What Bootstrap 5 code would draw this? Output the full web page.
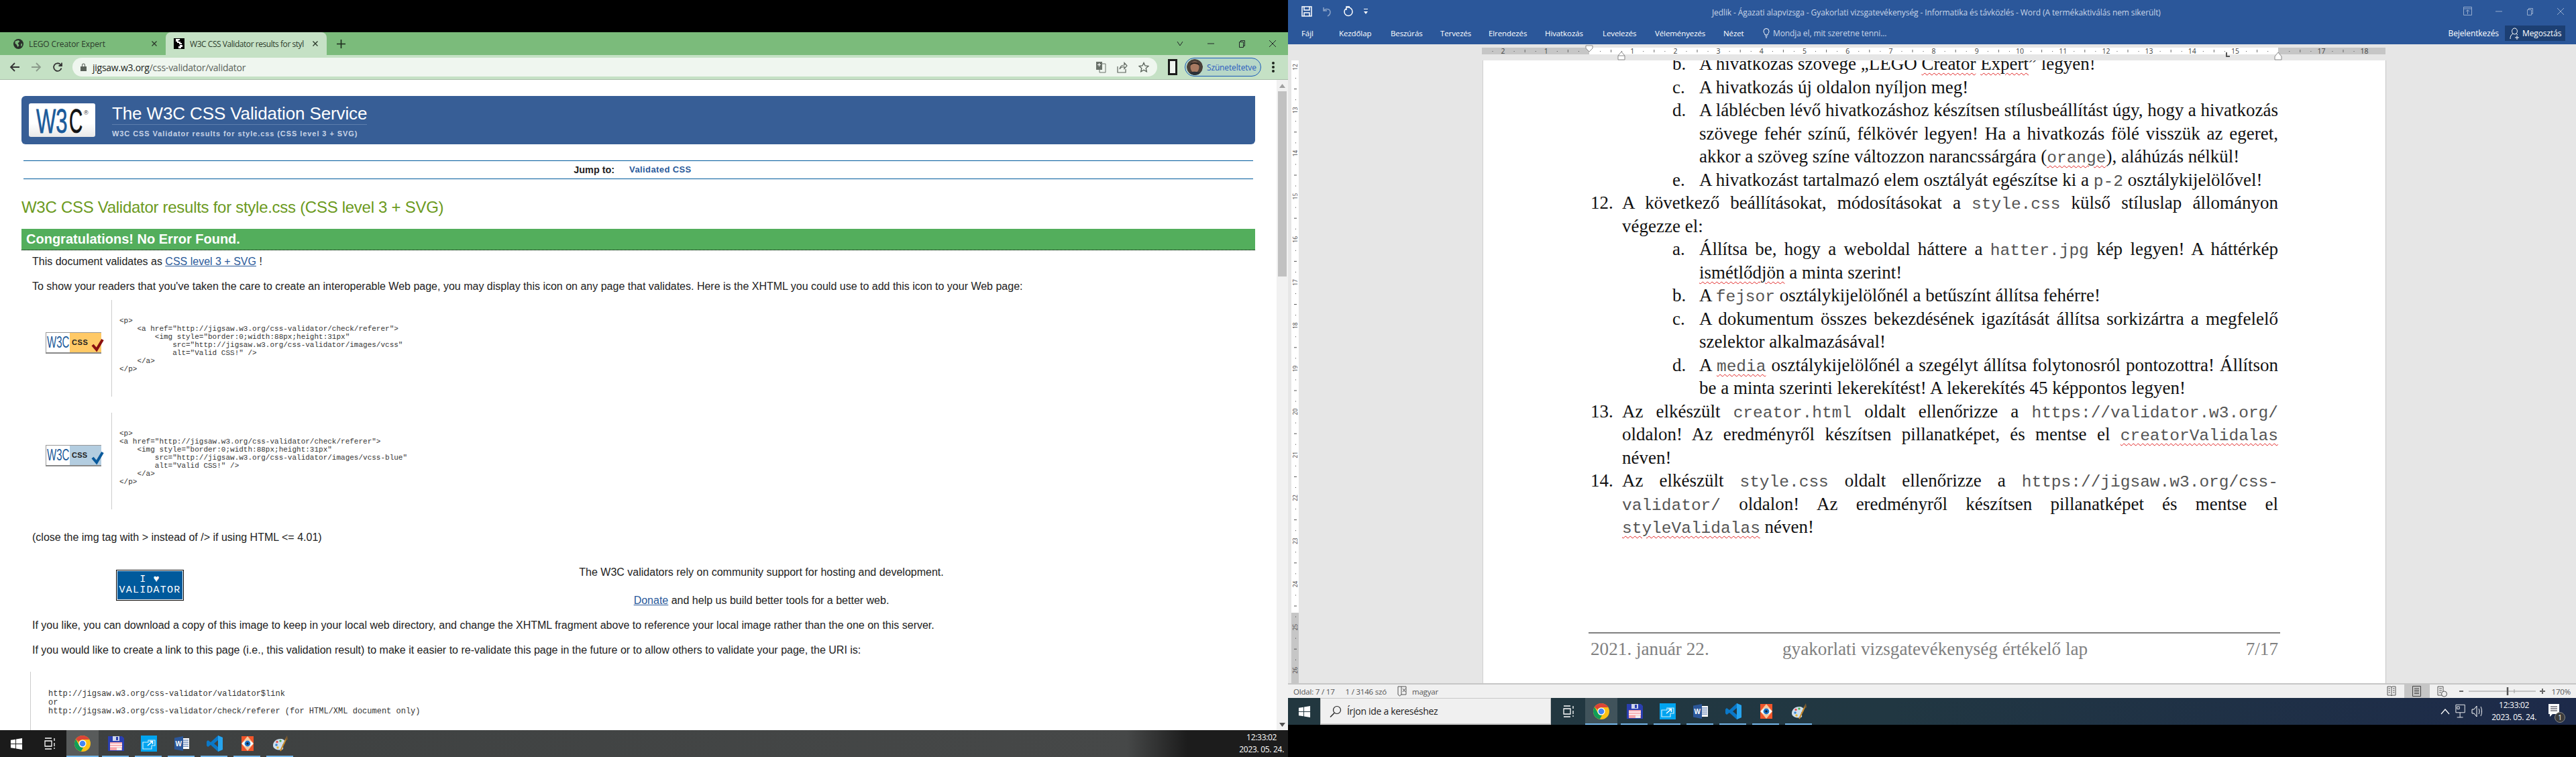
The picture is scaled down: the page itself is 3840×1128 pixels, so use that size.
<!DOCTYPE html>
<html lang="hu">
  <head>
    <meta charset="UTF-8" />
    <title>Screenshot</title>
    <link href="https://cdn.jsdelivr.net/npm/bootstrap@5.3.0/dist/css/bootstrap.min.css" rel="stylesheet" />
    <style>
      html, body { margin: 0; height: 1128px; overflow: hidden; background: #000; }
      .desk-left, .desk-right { width: 1920px; height: 1128px; flex: none; }
      .desk-left { padding-top: 48px; }
      .desk-right { padding-bottom: 48px; }

      /* chrome window */
      .gc-strip { height: 34px; background: #7bbb7b; font: 12px "Open Sans", sans-serif; color: #2b3a2b; }
      .gc-tab { height: 34px; padding-left: 20px; display: flex; align-items: center; flex: none; }
      .gc-tab-first { width: 247px; }
      .gc-tab-on { width: 240px; padding-left: 12px; background: #c5e1c5; border-radius: 8px 8px 0 0; }
      .gc-tab-title { margin-left: 8px; flex-grow: 1; white-space: nowrap; overflow: hidden; }
      .gc-tab-first .gc-tab-title { letter-spacing: -.1px; }
      .gc-tab-on .gc-tab-title { letter-spacing: -.45px; }
      .gc-tab-x { width: 8px; height: 8px; margin: 0 13px 0 6px; flex: none; }
      .gc-plus { margin-left: 15px; }
      .gc-winbtns { margin-left: auto; gap: 34px; padding-right: 17px; }
      .gc-bar { height: 37px; background: #c5e1c5; border-bottom: 1px solid #a8bca8; padding-left: 14px; }
      .gc-nav { gap: 16px; }
      .gc-omni { margin-left: 14px; width: 1617px; height: 28px; background: #eff6ef; border-radius: 14px; padding: 0 12px 0 12px; font: 14px "Open Sans", sans-serif; color: #5a625a; }
      .gc-url { margin-left: 9px; letter-spacing: -.25px; }
      .gc-url b { font-weight: 400; color: #202420; }
      .gc-omni-icons { margin-left: auto; gap: 16px; }
      .gc-side { margin-left: 16px; }
      .gc-pill { margin-left: 11px; width: 114px; height: 28px; border: 1px solid #1a5bb8; border-radius: 14px; background: #b7d7c7; color: #2a5bc0; font: 12px "Open Sans", sans-serif; padding-left: 2px; flex: none; }
      .gc-pill span { margin-left: 6px; letter-spacing: -.15px; white-space: nowrap; }
      .gc-face { width: 24px; height: 24px; border-radius: 50%; flex: none; }
      .gc-dots { margin-left: 16px; }
      .gc-view { height: 969px; }
      .gc-scroll { width: 17px; background: #f1f1f1; flex: none; }
      .gc-scroll-up, .gc-scroll-dn { height: 17px; display: flex; align-items: center; justify-content: center; flex: none; }
      .gc-scroll-thumb { height: 276px; margin: 0 2px; background: #c1c1c1; flex: none; }

      /* w3c validator page */
      .val-page { width: 1903px; background: #fff; font: 16px/20px "Liberation Sans", sans-serif; color: #222; flex: none; }
      .val-page a { color: #2a5a9a; }
      .val-banner { margin: 24px 32px 0; height: 72px; background: #375e96; border-radius: 6px 0 6px 6px; padding: 11px 0 0 11px; }
      .val-logo { width: 99px; height: 50px; background: linear-gradient(#fff 60%, #e8e8e8); border-radius: 3px; flex: none; }
      .val-art { overflow: visible; display: block; }
      .val-titles { margin-left: 25px; }
      .val-title { font-size: 26px; line-height: 30px; color: #fff; border-bottom: 1px solid #5d7eac; padding-bottom: 1px; letter-spacing: -.12px; }
      .val-sub { font-size: 11px; line-height: 14px; font-weight: 700; color: #c8d4e6; margin-top: 6px; letter-spacing: .93px; }
      .val-jump { margin: 24px 35px 0; height: 28px; border-top: 1px solid #005a9c; border-bottom: 1px solid #005a9c; font-size: 14.4px; font-weight: 700; padding-right: 17px; }
      .val-jump a { margin-left: 22px; text-decoration: none; font-size: 13px; letter-spacing: .4px; color: #2a5a9a; }
      .val-h { margin: 24px 32px 0; font-size: 24px; line-height: 36px; font-weight: 400; color: #6c9a1e; letter-spacing: -.28px; }
      .val-ok { margin: 14px 32px 0; height: 32px; background: #53ae5c; border-bottom: 1px dotted #000; color: #fff; font-size: 20px; line-height: 31px; font-weight: 700; padding-left: 7px; }
      .val-p { padding-left: 48px; margin: 17px 0 0; }
      .val-p-first { margin-top: 7px; }
      .val-p-close { margin-top: 32px; }
      .val-demo { height: 144px; }
      .val-demo-1 { margin-top: 10px; }
      .val-demo-2 { margin-top: 24px; }
      .val-demo-badge { width: 166px; padding: 48px 0 0 68px; flex: none; }
      .val-pre { margin: 0; border-left: 1px solid #ccc; padding: 25px 0 0 11px; flex-grow: 1; font: 11px/12px "Liberation Mono", monospace; color: #333; overflow: hidden; }
      .val-donate { margin-top: 32px; height: 62px; }
      .val-heart { margin: 6px 0 0 173px; width: 101px; height: 46px; background: #005a9c; border: 1px solid #000; outline: 1px solid #fff; outline-offset: -2px; color: #fff; font: 15px/16px "Liberation Mono", monospace; letter-spacing: 1.2px; flex: none; text-align: center; padding-top: 6px; white-space: nowrap; }
      .val-donate-text { margin-left: 93px; flex-grow: 1; text-align: center; }
      .val-donate-text p { margin: 0 0 22px; }
      .val-uri { margin: 22px 0 0 45px; border-left: 1px solid #ccc; padding: 27px 0 0 26px; font: 12px/13px "Liberation Mono", monospace; color: #333; height: 200px; }

      /* windows taskbars */
      .tb-bar { height: 40px; flex: none; color: #fff; font: 12px "Open Sans", sans-serif; }
      .tb-left { background: linear-gradient(90deg, #1b1b1b 0, #1b1b1b 99px, #3d4040 99px, #464848 1680px, #1c1c1c 1770px); }
      .tb-right { background: linear-gradient(90deg, #22373f, #213742 900px, #1d2a4a); }
      .tb-win { width: 48px; display: flex; align-items: center; justify-content: center; flex: none; }
      .tb-tasks { width: 51px; display: flex; align-items: center; justify-content: center; flex: none; }
      .tb-app { width: 49px; height: 40px; display: flex; align-items: center; justify-content: center; flex: none; position: relative; }
      .tb-app::after { content: ""; position: absolute; left: 4px; right: 5px; bottom: 0; height: 2px; background: #76b9ed; }
      .tb-app-on { background: rgba(255, 255, 255, .14); width: 48px; margin-right: 1px; }
      .tb-app-on::after { left: 0; right: 0; }
      .tb-clock { text-align: center; line-height: 18px; letter-spacing: -.3px; }
      .tb-clock-left { padding-right: 6px; }
      .tb-search { width: 344px; height: 40px; background: #f0f0f0; border: 1px solid #c8c8c8; border-bottom-width: 2px; color: #222; font-size: 14px; padding-left: 13px; flex: none; }
      .tb-search span { margin-left: 8px; letter-spacing: -.3px; }
      .tb-tray { margin-left: auto; }
      .tb-notif { position: relative; margin: 0 23px 0 10px; width: 18px; height: 22px; }
      .tb-count { position: absolute; right: -7px; bottom: -6px; width: 16px; height: 16px; border-radius: 50%; background: #3c3c3c; border: 1px solid #888; font-size: 10px; line-height: 14px; text-align: center; }

      /* word */
      .wd-head { height: 66px; background: #2b579a; color: #fff; font: 12px "Open Sans", sans-serif; flex: none; }
      .wd-titlebar { height: 33px; padding-left: 20px; position: relative; }
      .wd-qat { gap: 14px; }
      .wd-name { margin-left: 512px; color: #c8d5e8; padding-top: 3px; letter-spacing: -.1px; white-space: nowrap; }
      .wd-ctrls { margin-left: auto; gap: 34px; padding-right: 17px; opacity: .5; }
      .wd-tabs { height: 33px; padding-left: 20px; }
      .wd-tabs a { color: #fff; text-decoration: none; padding: 0; font-size: 11.5px; letter-spacing: -.1px; flex: none; white-space: nowrap; }
      .wd-tabs a:nth-of-type(1) { width: 56px; }
      .wd-tabs a:nth-of-type(2) { width: 77px; }
      .wd-tabs a:nth-of-type(3) { width: 74px; }
      .wd-tabs a:nth-of-type(4) { width: 72px; }
      .wd-tabs a:nth-of-type(5) { width: 84px; }
      .wd-tabs a:nth-of-type(6) { width: 86px; }
      .wd-tabs a:nth-of-type(7) { width: 78px; }
      .wd-tabs a:nth-of-type(8) { width: 102px; }
      .wd-tabs a:nth-of-type(9) { width: 59px; }
      .wd-tell { color: #c8d5e8; gap: 5px; letter-spacing: -.1px; }
      .wd-login { margin-left: auto; letter-spacing: -.1px; }
      .wd-share { margin: 0 16px 0 9px; width: 90px; height: 23px; background: #1c3f73; padding-left: 7px; gap: 4px; letter-spacing: -.1px; }
      .wd-ruler { height: 24px; background: #e6e6e6; flex: none; display: block; }
      .wd-body { height: 928px; background: #e6e6e6; flex: none; }
      .wd-vrule { width: 11px; margin-left: 5px; flex: none; }
      .wd-page { width: 1347px; margin-left: 274px; background: #fff; border-right: 1px solid #c6c6c6; border-left: 1px solid #d0d0d0; padding: 0 160px; flex: none; font: 27px/34.5px "Liberation Serif", serif; color: #111; }
      .wd-text { margin-top: -12px; }
      .wd-row { display: flex; }
      .wd-row-top .wd-mark { width: 47px; }
      .wd-row-sub { padding-left: 122px; }
      .wd-row-sub .wd-mark { width: 40px; }
      .wd-mark { flex: none; }
      .wd-lines { flex-grow: 1; min-width: 0; }
      .wd-just { text-align: justify; text-align-last: justify; word-spacing: -1px; }
      .wd-code { font: 24.5px "Liberation Mono", monospace; color: #555; }
      .wd-sq { text-decoration: underline wavy #e02020 1px; text-underline-offset: 4px; }
      .wd-foot { margin-top: auto; margin-left: -3px; margin-right: -3px; padding: 6px 3px 34px; border-top: 2px solid #808080; color: #808080; font-size: 27.2px; }
      .wd-foot-date { width: 286px; flex: none; }
      .wd-foot-page { margin-left: auto; }
      .wd-status { height: 22px; background: #f0f0f0; border-top: 2px solid #c6c6c6; color: #555; font: 11.5px "Open Sans", sans-serif; padding-left: 8px; flex: none; letter-spacing: -.2px; }
      .wd-status-views { margin-left: auto; }
      .wd-view { width: 38px; height: 20px; display: flex; align-items: center; justify-content: center; }
      .wd-view-on { background: #c6c6c6; }
      .wd-zoom { width: 128px; margin-left: 6px; }
      .wd-pct { margin: 0 8px 0 10px; }
    </style>
  </head>
  <body class="d-flex">
    <svg width="0" height="0" class="position-absolute">
      <symbol id="ic-win" viewBox="0 0 20 20"><path fill="#fff" d="M1 4 8.5 2.8V9.4H1ZM9.5 2.6 19 1V9.4H9.5ZM1 10.5H8.5V17.2L1 16ZM9.5 10.5H19V19L9.5 17.4Z"/></symbol>
      <symbol id="ic-tasks" viewBox="0 0 20 20"><path fill="none" stroke="#fff" stroke-width="1.3" d="M3 2H13M3 18H13M3 6H13V14H3ZM17 2V6M17 9V14M17 16V18"/></symbol>
      <symbol id="ic-chrome" viewBox="0 0 24 24"><circle cx="12" cy="12" r="12" fill="#fbc116"/><path fill="#db4437" d="M2 5.4A12 12 0 0 1 22.4 6H12A6 6 0 0 0 6.5 9.6Z"/><path fill="#0f9d58" d="M2 5.4 7 14.5A6 6 0 0 0 13 18L9.8 23.8A12 12 0 0 1 2 5.4Z"/><circle cx="12" cy="12" r="5.6" fill="#fff"/><circle cx="12" cy="12" r="4.3" fill="#4285f4"/></symbol>
      <symbol id="ic-floppy" viewBox="0 0 24 24"><path fill="#2a3fb0" d="M0 1H21L24 4V23H0Z"/><rect x="7" y="1" width="10" height="7" fill="#cfd5ea"/><rect x="12" y="2" width="3" height="5" fill="#2a3fb0"/><rect x="3" y="10" width="18" height="12" fill="#f6a6ac"/><path stroke="#fff" stroke-width="1.4" d="M3 13H21M3 16.5H21"/><rect x="13" y="18" width="7" height="4" fill="#eee"/></symbol>
      <symbol id="ic-snip" viewBox="0 0 24 24"><rect width="24" height="24" fill="#00a4ef"/><path fill="none" stroke="#cfeffc" stroke-width="1.2" d="M3 10H11V7H21V15H16V20H3ZM3 10V20"/><path fill="none" stroke="#fff" stroke-width="1.6" d="M10 15 17 9M13 8.5H17.5V13"/></symbol>
      <symbol id="ic-word" viewBox="0 0 24 24"><path fill="#fff" d="M12 4H23V20H12Z"/><path stroke="#2b579a" stroke-width="1.2" d="M14 7H22M14 10H22M14 13H22M14 16H22"/><path fill="#2b579a" d="M1 3.5 14 1V23L1 20.5Z"/></symbol>
      <symbol id="ic-code" viewBox="0 0 24 24"><path fill="#0a78c8" d="M17 0 24 3V21L17 24 6 14 2 17 0 15V9L2 7 6 10ZM17 7 11 12 17 17Z"/><path fill="#26a4ee" d="M17 0 24 3V21L17 24Z"/></symbol>
      <symbol id="ic-eye" viewBox="0 0 24 24"><rect x="3" y="1" width="18" height="22" fill="#f0552a"/><path fill="#f4c9a0" d="M12 1 21 12 12 23 3 12Z"/><path fill="#fff" d="M3.5 12C8 6 16 6 20.5 12 16 18 8 18 3.5 12Z"/><circle cx="12" cy="12" r="4.4" fill="#1a72c8"/><circle cx="12" cy="12" r="1.8" fill="#123"/></symbol>
      <symbol id="ic-paint" viewBox="0 0 24 24"><path fill="#cfe0ee" d="M1 15C1 9 6 5 12 5 16 5 19 7 19 10 19 12 15 12 15 15 15 17 17 18 16 20 14 23 1 22 1 15Z"/><circle cx="6" cy="14" r="1.8" fill="#3a8ad0"/><circle cx="7" cy="9.500" r="1.700" fill="#e05050"/><circle cx="12" cy="8" r="1.700" fill="#4cb050"/><circle cx="8" cy="18" r="1.700" fill="#e8b830"/><path stroke="#c98a2a" stroke-width="2" d="M12 23 21 4"/><path fill="#7a5a30" d="M19 5 22 0 23 6 21 7Z"/></symbol>
      <symbol id="ic-x" viewBox="0 0 8 8"><path stroke="currentColor" stroke-width="1.4" d="M.5.5 7.5 7.500M7.500.5 .5 7.500"/></symbol>
      <symbol id="ic-min" viewBox="0 0 12 12"><path stroke="currentColor" d="M1 6H11"/></symbol>
      <symbol id="ic-max" viewBox="0 0 12 12"><path fill="none" stroke="currentColor" d="M2.500 3.500H8.500V11.500H2.500ZM4.500 3.500V1.500H10.500V9.500H8.500"/></symbol>
      <symbol id="ic-close" viewBox="0 0 12 12"><path stroke="currentColor" d="M1 1 11 11M11 1 1 11"/></symbol>
    </svg>

    <!-- left monitor: chrome -->
    <div class="desk-left d-flex flex-column">
      <div class="gc-strip d-flex align-items-center">
        <div class="gc-tab gc-tab-first">
          <svg width="15" height="15" viewBox="0 0 16 16"><circle cx="8" cy="8" r="8" fill="#2a2f2a"/><path fill="#7bbb7b" d="M3 3.500 8 2 10 4 7 7 9 10 7 13 5 9 2.500 7ZM12 8 14 7 13.500 11 12 12Z"/></svg>
          <span class="gc-tab-title">LEGO Creator Expert</span>
          <svg class="gc-tab-x"><use href="#ic-x" /></svg>
        </div>
        <div class="gc-tab gc-tab-on">
          <svg width="16" height="16" viewBox="0 0 16 16" shape-rendering="crispEdges"><rect width="16" height="16" fill="#000"/><path fill="#fff" d="M3 1H9V3H7V5H10V7H12V9H8V7H5V5H3ZM9 10H13V13H11V15H7V12H9Z"/></svg>
          <span class="gc-tab-title">W3C CSS Validator results for styl</span>
          <svg class="gc-tab-x"><use href="#ic-x" /></svg>
        </div>
        <svg class="gc-plus" width="13" height="13" viewBox="0 0 13 13"><path stroke="#1c2a1c" stroke-width="1.600" d="M6.500 0V13M0 6.500H13"/></svg>
        <div class="gc-winbtns d-flex align-items-center text-dark">
          <svg width="12" height="12" viewBox="0 0 12 12"><path fill="none" stroke="currentColor" d="M2 3 6 9 10 3"/></svg>
          <svg width="12" height="12"><use href="#ic-min" /></svg>
          <svg width="12" height="12"><use href="#ic-max" /></svg>
          <svg width="12" height="12"><use href="#ic-close" /></svg>
        </div>
      </div>
      <div class="gc-bar d-flex align-items-center">
        <div class="gc-nav d-flex">
          <svg width="16" height="16" viewBox="0 0 16 16"><path fill="none" stroke="#333" stroke-width="1.800" d="M15 8H2M8 2 2 8 8 14"/></svg>
          <svg width="16" height="16" viewBox="0 0 16 16"><path fill="none" stroke="#8a9a8a" stroke-width="1.800" d="M1 8H14M8 2 14 8 8 14"/></svg>
          <svg width="16" height="16" viewBox="0 0 16 16"><path fill="none" stroke="#333" stroke-width="1.800" d="M13.500 9.500A5.800 5.800 0 1 1 12 4L14 6M14 1.500V6H9.500"/></svg>
        </div>
        <div class="gc-omni d-flex align-items-center">
          <svg width="9" height="12" viewBox="0 0 9 12"><path fill="#5a625a" d="M0 5H9V12H0ZM2 5V3A2.500 2.500 0 0 1 7 3V5H6V3A1.500 1.500 0 0 0 3 3V5Z"/></svg>
          <span class="gc-url"><b>jigsaw.w3.org</b>/css-validator/validator</span>
          <div class="gc-omni-icons d-flex align-items-center">
            <svg width="16" height="18" viewBox="0 0 16 18"><rect x="1" y="1" width="9" height="12" fill="#6a726a"/><path fill="#fff" d="M3 5H8V6H3ZM5 3H6V8H5Z"/><path fill="none" stroke="#6a726a" d="M10 4H15V17H6V13"/></svg>
            <svg width="16" height="18" viewBox="0 0 16 18"><path fill="none" stroke="#5a625a" stroke-width="1.200" d="M1 8V17H13V12M4 12C5 7 8 6 11 6V2.500L15 7 11 11.500V8.500C8 8.500 6 9 4 12Z"/></svg>
            <svg width="16" height="16" viewBox="0 0 16 16"><path fill="none" stroke="#5a625a" stroke-width="1.300" d="M8 1.500 10 6 15 6.500 11.200 9.700 12.300 14.800 8 12.200 3.700 14.800 4.800 9.700 1 6.500 6 6Z"/></svg>
          </div>
        </div>
        <svg class="gc-side" width="14" height="24" viewBox="0 0 14 24"><rect width="14" height="24" fill="#1a1c1a"/><rect x="3" y="3" width="8" height="18" fill="#eef4ee"/></svg>
        <div class="gc-pill d-flex align-items-center">
          <svg class="gc-face" viewBox="0 0 24 24"><circle cx="12" cy="12" r="12" fill="#4a4038"/><ellipse cx="12" cy="12" rx="6.500" ry="8.500" fill="#a87a62"/><path fill="#2a2420" d="M5 10C5 3 19 3 19 10 15 6 9 6 5 10Z"/><path fill="#2a3038" d="M3 21C7 18 17 18 21 21 17 25 7 25 3 21Z"/></svg>
          <span>Szüneteltetve</span>
        </div>
        <svg class="gc-dots" width="4" height="18" viewBox="0 0 4 18"><g fill="#1c241c"><circle cx="2" cy="3" r="2"/><circle cx="2" cy="9" r="2"/><circle cx="2" cy="15" r="2"/></g></svg>
      </div>
      <div class="gc-view d-flex overflow-hidden">
        <main class="val-page">
          <div class="val-banner d-flex">
            <div class="val-logo">
              <svg class="val-art" width="99" height="50" viewBox="0 0 99 50"><text transform="translate(11 44) scale(1 1.62)" font-family="Liberation Sans" font-size="31" fill="#1a5a9a" stroke="#1a5a9a" stroke-width=".5">W3</text><text transform="translate(60 44) scale(1 1.8)" font-family="Liberation Sans" font-size="28" fill="#111" stroke="#111" stroke-width=".4">C</text><text x="82" y="17" font-family="Liberation Sans" font-size="9" fill="#333">®</text></svg>
            </div>
            <div class="val-titles">
              <div class="val-title">The W3C CSS Validation Service</div>
              <div class="val-sub">W3C CSS Validator results for style.css (CSS level 3 + SVG)</div>
            </div>
          </div>
          <div class="val-jump d-flex align-items-center justify-content-center">
            <span>Jump to:</span><a href="#css">Validated CSS</a>
          </div>
          <h2 class="val-h">W3C CSS Validator results for style.css (CSS level 3 + SVG)</h2>
          <div class="val-ok">Congratulations! No Error Found.</div>
          <p class="val-p val-p-first">This document validates as <a href="#l">CSS level 3 + SVG</a> !</p>
          <p class="val-p">To show your readers that you've taken the care to create an interoperable Web page, you may display this icon on any page that validates. Here is the XHTML you could use to add this icon to your Web page:</p>
          <div class="val-demo val-demo-1 d-flex">
            <div class="val-demo-badge">
              <svg class="val-art" width="92" height="34" viewBox="0 0 92 34"><rect x=".5" y=".5" width="82" height="30" fill="#fff" stroke="#999"/><rect x="36" y="1" width="47" height="29" fill="#ffc966"/><path stroke="#888" stroke-width="2" d="M0 31H83"/><text transform="translate(2 23) scale(1 1.56)" font-family="Liberation Sans" font-size="15" fill="#1a5a9a">W3C</text><text x="39" y="19" font-family="Liberation Sans" font-size="11" font-weight="700" fill="#222" letter-spacing=".6">CSS</text><path fill="none" stroke="#8a1010" stroke-width="4" d="M70 19 76 26 85 11"/></svg>
            </div>
            <pre class="val-pre">&lt;p&gt;
    &lt;a href="http://jigsaw.w3.org/css-validator/check/referer"&gt;
        &lt;img style="border:0;width:88px;height:31px"
            src="http://jigsaw.w3.org/css-validator/images/vcss"
            alt="Valid CSS!" /&gt;
    &lt;/a&gt;
&lt;/p&gt;</pre>
          </div>
          <div class="val-demo val-demo-2 d-flex">
            <div class="val-demo-badge">
              <svg class="val-art" width="92" height="34" viewBox="0 0 92 34"><rect x=".5" y=".5" width="82" height="30" fill="#fff" stroke="#999"/><rect x="36" y="1" width="47" height="29" fill="#b3cde0"/><path stroke="#888" stroke-width="2" d="M0 31H83"/><text transform="translate(2 23) scale(1 1.56)" font-family="Liberation Sans" font-size="15" fill="#1a5a9a">W3C</text><text x="39" y="19" font-family="Liberation Sans" font-size="11" font-weight="700" fill="#222" letter-spacing=".2">CSS</text><path fill="none" stroke="#0a5a9c" stroke-width="4" d="M70 19 76 26 85 11"/></svg>
            </div>
            <pre class="val-pre">&lt;p&gt;
&lt;a href="http://jigsaw.w3.org/css-validator/check/referer"&gt;
    &lt;img style="border:0;width:88px;height:31px"
        src="http://jigsaw.w3.org/css-validator/images/vcss-blue"
        alt="Valid CSS!" /&gt;
    &lt;/a&gt;
&lt;/p&gt;</pre>
          </div>
          <p class="val-p val-p-close">(close the img tag with &gt; instead of /&gt; if using HTML &lt;= 4.01)</p>
          <div class="val-donate d-flex">
            <div class="val-heart">I ♥<br />VALIDATOR</div>
            <div class="val-donate-text">
              <p>The W3C validators rely on community support for hosting and development.</p>
              <p><a href="#d">Donate</a> and help us build better tools for a better web.</p>
            </div>
          </div>
          <p class="val-p">If you like, you can download a copy of this image to keep in your local web directory, and change the XHTML fragment above to reference your local image rather than the one on this server.</p>
          <p class="val-p">If you would like to create a link to this page (i.e., this validation result) to make it easier to re-validate this page in the future or to allow others to validate your page, the URI is:</p>
          <div class="val-uri">http://jigsaw.w3.org/css-validator/validator$link<br />or<br />http://jigsaw.w3.org/css-validator/check/referer (for HTML/XML document only)</div>
        </main>
        <div class="gc-scroll d-flex flex-column">
          <div class="gc-scroll-up"><svg width="9" height="6"><path fill="#a0a0a0" d="M4.500 0 9 6H0Z"/></svg></div>
          <div class="gc-scroll-thumb"></div>
          <div class="flex-grow-1"></div>
          <div class="gc-scroll-dn"><svg width="9" height="6"><path fill="#505050" d="M0 0H9L4.500 6Z"/></svg></div>
        </div>
      </div>
      <div class="tb-bar tb-left d-flex align-items-center">
        <div class="tb-win"><svg width="19" height="19"><use href="#ic-win" /></svg></div>
        <div class="tb-tasks"><svg width="20" height="20"><use href="#ic-tasks" /></svg></div>
        <div class="tb-app tb-app-on"><svg width="24" height="24"><use href="#ic-chrome" /></svg></div>
        <div class="tb-app"><svg width="24" height="24"><use href="#ic-floppy" /></svg></div>
        <div class="tb-app"><svg width="24" height="24"><use href="#ic-snip" /></svg></div>
        <div class="tb-app"><svg width="24" height="24" viewBox="0 0 24 24"><use href="#ic-word" /><text x="2.500" y="16" font-family="Liberation Sans" font-size="10" font-weight="700" fill="#fff">W</text></svg></div>
        <div class="tb-app"><svg width="24" height="24"><use href="#ic-code" /></svg></div>
        <div class="tb-app"><svg width="24" height="24"><use href="#ic-eye" /></svg></div>
        <div class="tb-app"><svg width="24" height="24"><use href="#ic-paint" /></svg></div>
        <div class="tb-tray tb-clock tb-clock-left">12:33:02<br />2023. 05. 24.</div>
      </div>
    </div>

    <!-- right monitor: word -->
    <div class="desk-right d-flex flex-column">
      <div class="wd-head">
        <div class="wd-titlebar d-flex align-items-center">
          <div class="wd-qat d-flex align-items-center">
            <svg width="16" height="16" viewBox="0 0 16 16"><path fill="none" stroke="#fff" stroke-width="1.500" d="M1 1H15V15H1ZM4 1V6H12V1M4 15V10H12V15"/></svg>
            <svg width="18" height="16" viewBox="0 0 18 16" opacity=".45"><path fill="none" stroke="#fff" stroke-width="1.500" d="M3 2V7H8M3 7C6 3 13 4 13 9 13 12 11 14 9 15"/></svg>
            <svg width="16" height="16" viewBox="0 0 16 16"><path fill="none" stroke="#fff" stroke-width="1.500" d="M10 1H5V6M5 2C10 1 14 4 14 8.500A6 6 0 0 1 2 8.500C2 6 3 5 4 4"/></svg>
            <svg width="8" height="10" viewBox="0 0 8 10"><path fill="#fff" d="M1 1H7V2H1ZM1 5H7L4 9Z"/></svg>
          </div>
          <div class="wd-name">Jedlik - Ágazati alapvizsga - Gyakorlati vizsgatevékenység - Informatika és távközlés - Word (A termékaktiválás nem sikerült)</div>
          <div class="wd-ctrls d-flex align-items-center">
            <svg width="13" height="13" viewBox="0 0 13 13"><path fill="none" stroke="#fff" d="M.5.5H12.500V12.500H.5ZM.5 3H12.500M6.500 11V5M4 7 6.500 5 9 7"/></svg>
            <svg width="12" height="12"><use href="#ic-min" /></svg>
            <svg width="12" height="12"><use href="#ic-max" /></svg>
            <svg width="12" height="12"><use href="#ic-close" /></svg>
          </div>
        </div>
        <nav class="nav wd-tabs align-items-center flex-nowrap">
          <a class="nav-link" href="#f">Fájl</a>
          <a class="nav-link" href="#k">Kezdőlap</a>
          <a class="nav-link" href="#b">Beszúrás</a>
          <a class="nav-link" href="#t">Tervezés</a>
          <a class="nav-link" href="#e">Elrendezés</a>
          <a class="nav-link" href="#h">Hivatkozás</a>
          <a class="nav-link" href="#l">Levelezés</a>
          <a class="nav-link" href="#v">Véleményezés</a>
          <a class="nav-link" href="#n">Nézet</a>
          <div class="wd-tell d-flex align-items-center">
            <svg width="10" height="15" viewBox="0 0 10 15"><path fill="none" stroke="#fff" d="M3 10C3 8 1 7 1 4.500A4 4 0 0 1 9 4.500C9 7 7 8 7 10ZM3.500 12H6.500M4 14H6"/></svg>
            <span>Mondja el, mit szeretne tenni...</span>
          </div>
          <span class="wd-login">Bejelentkezés</span>
          <div class="wd-share d-flex align-items-center">
            <svg width="15" height="18" viewBox="0 0 15 18"><path fill="none" stroke="#fff" d="M7.500 1A3.500 4 0 0 1 7.500 10 3.500 4 0 0 1 7.500 1M5 9C2 11 1 13 1 17M10 9 12 11M8 15H14M11 12V18"/></svg>
            <span>Megosztás</span>
          </div>
        </nav>
      </div>
      <svg id="hruler" class="wd-ruler" width="1920" height="24"></svg>
      <div class="wd-body d-flex">
        <svg id="vruler" class="wd-vrule" width="11" height="928"></svg>
        <div class="wd-page d-flex flex-column overflow-hidden">
          <div class="wd-text">
            <div class="wd-row wd-row-sub"><span class="wd-mark">b.</span><div class="wd-lines"><div>A hivatkozás szövege „LEGO <span class="wd-sq">Creator</span> <span class="wd-sq">Expert</span>” legyen!</div></div></div>
            <div class="wd-row wd-row-sub"><span class="wd-mark">c.</span><div class="wd-lines"><div>A hivatkozás új oldalon nyíljon meg!</div></div></div>
            <div class="wd-row wd-row-sub"><span class="wd-mark">d.</span><div class="wd-lines">
              <div class="wd-just">A láblécben lévő hivatkozáshoz készítsen stílusbeállítást úgy, hogy a hivatkozás</div>
              <div class="wd-just">szövege fehér színű, félkövér legyen! Ha a hivatkozás fölé visszük az egeret,</div>
              <div>akkor a szöveg színe változzon narancssárgára (<span class="wd-code wd-sq">orange</span>), aláhúzás nélkül!</div>
            </div></div>
            <div class="wd-row wd-row-sub"><span class="wd-mark">e.</span><div class="wd-lines"><div>A hivatkozást tartalmazó elem osztályát egészítse ki a <span class="wd-code">p-2</span> osztálykijelölővel!</div></div></div>
            <div class="wd-row wd-row-top"><span class="wd-mark">12.</span><div class="wd-lines">
              <div class="wd-just">A következő beállításokat, módosításokat a <span class="wd-code">style.css</span> külső stíluslap állományon</div>
              <div>végezze el:</div>
            </div></div>
            <div class="wd-row wd-row-sub"><span class="wd-mark">a.</span><div class="wd-lines">
              <div class="wd-just">Állítsa be, hogy a weboldal háttere a <span class="wd-code">hatter.jpg</span> kép legyen! A háttérkép</div>
              <div><span class="wd-sq">ismétlődjön</span> a minta szerint!</div>
            </div></div>
            <div class="wd-row wd-row-sub"><span class="wd-mark">b.</span><div class="wd-lines"><div>A <span class="wd-code">fejsor</span> osztálykijelölőnél a betűszínt állítsa fehérre!</div></div></div>
            <div class="wd-row wd-row-sub"><span class="wd-mark">c.</span><div class="wd-lines">
              <div class="wd-just">A dokumentum összes bekezdésének igazítását állítsa sorkizártra a megfelelő</div>
              <div>szelektor alkalmazásával!</div>
            </div></div>
            <div class="wd-row wd-row-sub"><span class="wd-mark">d.</span><div class="wd-lines">
              <div class="wd-just">A <span class="wd-code wd-sq">media</span> osztálykijelölőnél a szegélyt állítsa folytonosról pontozottra! Állítson</div>
              <div>be a minta szerinti lekerekítést! A lekerekítés 45 képpontos legyen!</div>
            </div></div>
            <div class="wd-row wd-row-top"><span class="wd-mark">13.</span><div class="wd-lines">
              <div class="wd-just">Az elkészült <span class="wd-code">creator.html</span> oldalt ellenőrizze a <span class="wd-code">https://validator.w3.org/</span></div>
              <div class="wd-just">oldalon! Az eredményről készítsen pillanatképet, és mentse el <span class="wd-code wd-sq">creatorValidalas</span></div>
              <div>néven!</div>
            </div></div>
            <div class="wd-row wd-row-top"><span class="wd-mark">14.</span><div class="wd-lines">
              <div class="wd-just">Az elkészült <span class="wd-code">style.css</span> oldalt ellenőrizze a <span class="wd-code">https://jigsaw.w3.org/css-</span></div>
              <div class="wd-just"><span class="wd-code">validator/</span> oldalon! Az eredményről készítsen pillanatképet és mentse el</div>
              <div><span class="wd-code wd-sq">styleValidalas</span> néven!</div>
            </div></div>
          </div>
          <div class="wd-foot d-flex">
            <span class="wd-foot-date">2021. január 22.</span>
            <span>gyakorlati vizsgatevékenység értékelő lap</span>
            <span class="wd-foot-page">7/17</span>
          </div>
        </div>
      </div>
      <div class="wd-status d-flex align-items-center">
        <span>Oldal: 7 / 17</span>
        <span class="ms-3">1 / 3146 szó</span>
        <svg class="ms-3" width="14" height="16" viewBox="0 0 14 16"><path fill="none" stroke="#555" d="M1 1H6V13L3.500 15 1 13ZM6 1H13V13H6M8 4 12 9M12 4 8 9"/></svg>
        <span class="ms-2">magyar</span>
        <div class="wd-status-views d-flex align-items-center">
          <div class="wd-view"><svg width="14" height="16" viewBox="0 0 14 16"><path fill="none" stroke="#555" d="M1 1H6L7 2 8 1H13V14H8L7 15 6 14H1ZM7 2V15M2.500 4H5M2.500 7H5M2.500 10H5M9 4H11.500M9 7H11.500M9 10H11.500"/></svg></div>
          <div class="wd-view wd-view-on"><svg width="13" height="16" viewBox="0 0 13 16"><path fill="none" stroke="#444" d="M.5.5H12.500V15.500H.5ZM3 4H10M3 6.500H10M3 9H10M3 11.500H10"/></svg></div>
          <div class="wd-view"><svg width="15" height="17" viewBox="0 0 15 17"><path fill="none" stroke="#555" d="M1 1H9V14H1ZM3 4H7M3 7H7M3 10H6"/><circle cx="10.500" cy="12" r="4" fill="#f0f0f0" stroke="#555"/></svg></div>
          <svg class="wd-zoom" height="14" viewBox="0 0 128 14"><path stroke="#666" stroke-width="2" d="M0 7H6M120 7H128M124 3V11"/><path stroke="#999" d="M14 7H114M82 4V10"/><path stroke="#555" stroke-width="2.500" d="M72 1V13"/></svg>
          <span class="wd-pct">170%</span>
        </div>
      </div>
      <div class="tb-bar tb-right d-flex align-items-center">
        <div class="tb-win"><svg width="19" height="19"><use href="#ic-win" /></svg></div>
        <div class="tb-search d-flex align-items-center">
          <svg width="18" height="18" viewBox="0 0 18 18"><circle cx="11" cy="7" r="5.500" fill="none" stroke="#222" stroke-width="1.200"/><path stroke="#222" stroke-width="1.400" d="M7 11.500 1 17.500"/></svg>
          <span>Írjon ide a kereséshez</span>
        </div>
        <div class="tb-tasks"><svg width="20" height="20"><use href="#ic-tasks" /></svg></div>
        <div class="tb-app tb-app-on"><svg width="24" height="24"><use href="#ic-chrome" /></svg></div>
        <div class="tb-app"><svg width="24" height="24"><use href="#ic-floppy" /></svg></div>
        <div class="tb-app"><svg width="24" height="24"><use href="#ic-snip" /></svg></div>
        <div class="tb-app"><svg width="24" height="24" viewBox="0 0 24 24"><use href="#ic-word" /><text x="2.500" y="16" font-family="Liberation Sans" font-size="10" font-weight="700" fill="#fff">W</text></svg></div>
        <div class="tb-app"><svg width="24" height="24"><use href="#ic-code" /></svg></div>
        <div class="tb-app"><svg width="24" height="24"><use href="#ic-eye" /></svg></div>
        <div class="tb-app"><svg width="24" height="24"><use href="#ic-paint" /></svg></div>
        <div class="tb-tray d-flex align-items-center gap-2">
          <svg width="14" height="10" viewBox="0 0 14 10"><path fill="none" stroke="#fff" stroke-width="1.200" d="M1 9 7 2 13 9"/></svg>
          <svg width="16" height="24" viewBox="0 0 18 24"><path fill="none" stroke="#fff" d="M1 1H16V14H1ZM3 4H7V8H3ZM8 14V22M3 22H13"/></svg>
          <svg width="18" height="22" viewBox="0 0 18 22"><path fill="none" stroke="#fff" d="M1 8H4L8 3V19L4 14H1ZM11 7C12.500 9 12.500 13 11 15M14 4C16 8 16 14 14 18"/></svg>
          <div class="tb-clock ms-1">12:33:02<br />2023. 05. 24.</div>
          <div class="tb-notif">
            <svg width="16" height="20" viewBox="0 0 16 20"><path fill="#fff" d="M0 0H16V15H6L2 19V15H0Z"/><path stroke="#223" d="M3 4H13M3 7H13M3 10H13"/></svg>
            <span class="tb-count">1</span>
          </div>
        </div>
      </div>
    </div>

    <script>
      // rulers of the word window
      const RULER_STEP = 64.2;

      function buildHorizontalRuler() {
        let out = '<rect x="289" y="5" width="1347" height="10" fill="#fff"/>';
        out += '<rect x="289" y="5" width="160" height="10" fill="#c6c6c6"/><rect x="1476" y="5" width="160" height="10" fill="#c6c6c6"/>';
        for (let n = -2.5; n <= 18; n += 0.25) {
          const x = 449 + n * RULER_STEP;
          if (x < 290 || x > 1634 || n === 0 || n === 16) continue;
          if (Number.isInteger(n)) {
            out += `<text x="${x}" y="14" text-anchor="middle" font-family="Open Sans" font-size="10.500" fill="#444">${Math.abs(n)}</text>`;
          } else if (Number.isInteger(n * 2)) {
            out += `<rect x="${x}" y="8" width="1" height="4" fill="#666"/>`;
          } else {
            out += `<rect x="${x}" y="10" width="1" height="1" fill="#555"/>`;
          }
        }
        // indent and tab markers
        out += '<path d="M444 2H454V6L449 11 444 6Z" fill="#fff" stroke="#888"/>';
        out += '<path d="M492 17 497 11 502 17V23H492ZM492 17H502" fill="#fff" stroke="#888"/>';
        out += '<path d="M1471 18 1476 12 1481 18V23H1471Z" fill="#fff" stroke="#888"/>';
        out += '<path d="M1399 12V18H1404" fill="none" stroke="#555" stroke-width="2"/>';
        document.getElementById("hruler").innerHTML = out;
      }

      function buildVerticalRuler() {
        let out = '<rect width="11" height="823" fill="#fff"/><rect y="823" width="11" height="105" fill="#c6c6c6"/>';
        for (let n = 12; n <= 26; n += 0.25) {
          const y = 10 + (n - 12) * RULER_STEP;
          if (Number.isInteger(n)) {
            out += `<text transform="translate(9 ${y}) rotate(-90)" text-anchor="middle" font-family="Open Sans" font-size="8.500" fill="#444">${n}</text>`;
          } else if (Number.isInteger(n * 2)) {
            out += `<rect x="4" y="${y}" width="4" height="1" fill="#555"/>`;
          } else {
            out += `<rect x="6" y="${y}" width="1" height="1" fill="#444"/>`;
          }
        }
        document.getElementById("vruler").innerHTML = out;
      }

      buildHorizontalRuler();
      buildVerticalRuler();
    </script>
    <script src="https://cdn.jsdelivr.net/npm/bootstrap@5.3.0/dist/js/bootstrap.bundle.min.js"></script>
  </body>
</html>
